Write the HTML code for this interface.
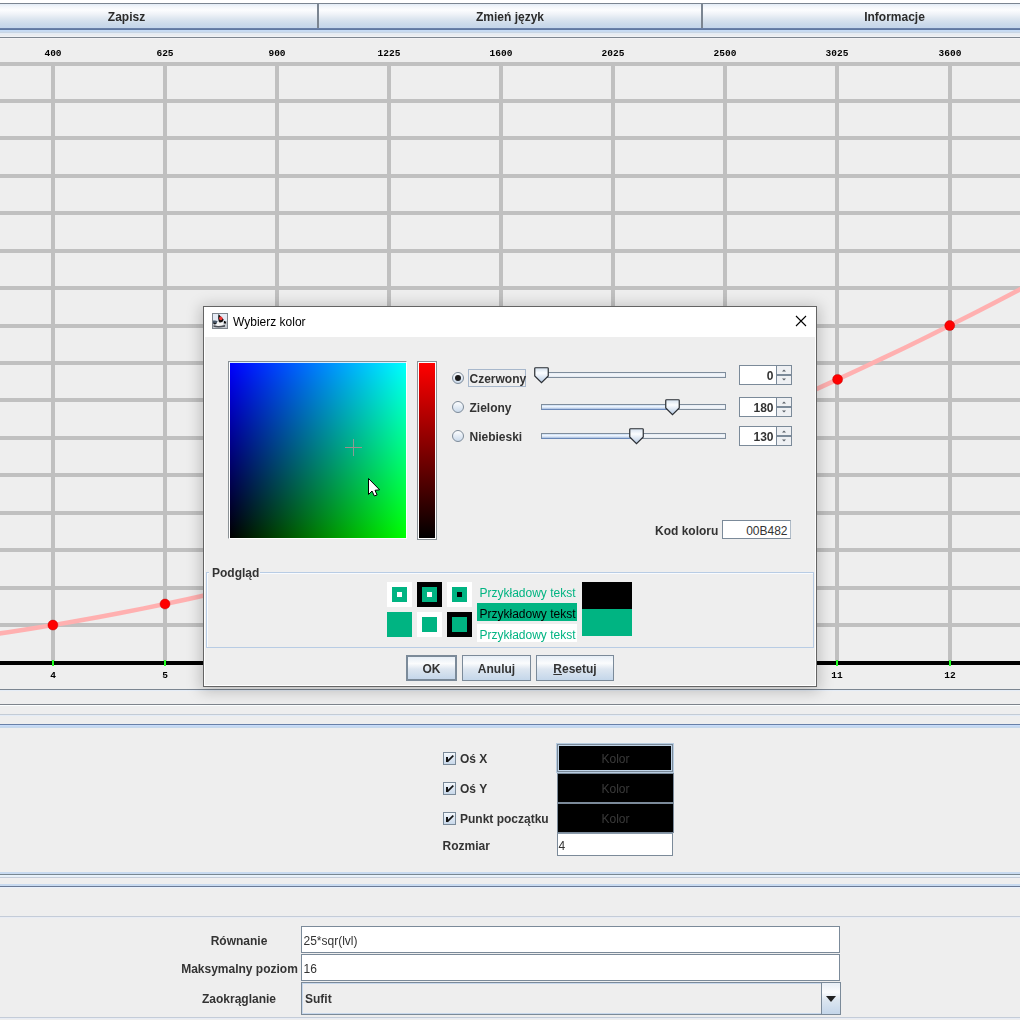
<!DOCTYPE html>
<html><head><meta charset="utf-8">
<style>
html,body{margin:0;padding:0;}
body{width:1020px;height:1020px;overflow:hidden;position:relative;background:#eeeeee;font-family:"Liberation Sans", sans-serif;}
.t{position:absolute;white-space:nowrap;}
div{box-sizing:border-box;}
</style></head><body>

<div style="position:absolute;left:0px;top:0px;width:1020px;height:3px;background:#ffffff"></div>
<div style="position:absolute;left:0px;top:3px;width:1020px;height:1px;background:#7b8591"></div>
<div style="position:absolute;left:0px;top:4px;width:1020px;height:24px;background:linear-gradient(to bottom,#e3ecf6 0px,#f4f7fb 3px,#fcfdfe 6px,#f0f3f8 10px,#dce5ef 15px,#ccdaea 20px,#c3d5ea 24px)"></div>
<div style="position:absolute;left:317px;top:3px;width:2px;height:26px;background:#7b8591"></div>
<div style="position:absolute;left:701px;top:3px;width:2px;height:26px;background:#7b8591"></div>
<div style="position:absolute;left:0px;top:28px;width:1020px;height:1px;background:#6a80a8"></div>
<div style="position:absolute;left:0px;top:29px;width:1020px;height:1px;background:#6078a0"></div>
<div style="position:absolute;left:0px;top:30px;width:1020px;height:1px;background:#c6daf4"></div>
<div style="position:absolute;left:0px;top:31px;width:1020px;height:1px;background:#c8daf0"></div>
<div style="position:absolute;left:0px;top:32px;width:1020px;height:1px;background:#cad6e4"></div>
<div style="position:absolute;left:0px;top:33px;width:1020px;height:1px;background:#e4ecf6"></div>
<div style="position:absolute;left:0px;top:34px;width:1020px;height:2px;background:#eaecf0"></div>
<div style="position:absolute;left:0px;top:36px;width:1020px;height:1px;background:#f0f2f6"></div>
<div style="position:absolute;left:0px;top:37px;width:1020px;height:1px;background:#7e8690"></div>
<div style="position:absolute;left:0px;top:38px;width:1020px;height:1px;background:#f4f2f4"></div>
<div class="t" style="left:-73.5px;width:400px;text-align:center;top:9.03px;font-size:12px;line-height:16px;font-weight:bold;color:#2b2b2b;">Zapisz</div>
<div class="t" style="left:310px;width:400px;text-align:center;top:9.03px;font-size:12px;line-height:16px;font-weight:bold;color:#2b2b2b;">Zmień język</div>
<div class="t" style="left:694.5px;width:400px;text-align:center;top:9.03px;font-size:12px;line-height:16px;font-weight:bold;color:#2b2b2b;">Informacje</div>
<svg style="position:absolute;left:0;top:0" width="1020" height="689">
<rect x="0" y="62" width="1020" height="4" fill="#c0c0c0"/>
<rect x="0" y="99" width="1020" height="4" fill="#c0c0c0"/>
<rect x="0" y="136" width="1020" height="4" fill="#c0c0c0"/>
<rect x="0" y="174" width="1020" height="4" fill="#c0c0c0"/>
<rect x="0" y="211" width="1020" height="4" fill="#c0c0c0"/>
<rect x="0" y="249" width="1020" height="4" fill="#c0c0c0"/>
<rect x="0" y="286" width="1020" height="4" fill="#c0c0c0"/>
<rect x="0" y="324" width="1020" height="4" fill="#c0c0c0"/>
<rect x="0" y="361" width="1020" height="4" fill="#c0c0c0"/>
<rect x="0" y="398" width="1020" height="4" fill="#c0c0c0"/>
<rect x="0" y="436" width="1020" height="4" fill="#c0c0c0"/>
<rect x="0" y="473" width="1020" height="4" fill="#c0c0c0"/>
<rect x="0" y="511" width="1020" height="4" fill="#c0c0c0"/>
<rect x="0" y="548" width="1020" height="4" fill="#c0c0c0"/>
<rect x="0" y="586" width="1020" height="4" fill="#c0c0c0"/>
<rect x="0" y="623" width="1020" height="4" fill="#c0c0c0"/>
<rect x="51" y="62" width="4" height="600" fill="#c0c0c0"/>
<rect x="163" y="62" width="4" height="600" fill="#c0c0c0"/>
<rect x="275" y="62" width="4" height="600" fill="#c0c0c0"/>
<rect x="387" y="62" width="4" height="600" fill="#c0c0c0"/>
<rect x="499" y="62" width="4" height="600" fill="#c0c0c0"/>
<rect x="611" y="62" width="4" height="600" fill="#c0c0c0"/>
<rect x="723" y="62" width="4" height="600" fill="#c0c0c0"/>
<rect x="835" y="62" width="4" height="600" fill="#c0c0c0"/>
<rect x="948" y="62" width="4" height="600" fill="#c0c0c0"/>
<rect x="0" y="661" width="1020" height="4" fill="#000"/>
<rect x="52" y="660" width="2" height="6" fill="#22ff22"/>
<rect x="164" y="660" width="2" height="6" fill="#22ff22"/>
<rect x="276" y="660" width="2" height="6" fill="#22ff22"/>
<rect x="388" y="660" width="2" height="6" fill="#22ff22"/>
<rect x="500" y="660" width="2" height="6" fill="#22ff22"/>
<rect x="612" y="660" width="2" height="6" fill="#22ff22"/>
<rect x="724" y="660" width="2" height="6" fill="#22ff22"/>
<rect x="836" y="660" width="2" height="6" fill="#22ff22"/>
<rect x="949" y="660" width="2" height="6" fill="#22ff22"/>
<polyline points="-59.2,641.4 -36.8,638.5 -14.4,635.5 8.1,632.2 30.5,628.7 52.9,625.1 75.3,621.2 97.7,617.2 120.2,613.0 142.6,608.6 165.0,604.0 187.4,599.2 209.8,594.3 232.3,589.1 254.7,583.8 277.1,578.3 299.5,572.6 321.9,566.7 344.4,560.6 366.8,554.3 389.2,547.8 411.6,541.2 434.0,534.4 456.5,527.4 478.9,520.1 501.3,512.8 523.7,505.2 546.1,497.4 568.6,489.4 591.0,481.3 613.4,473.0 635.8,464.5 658.2,455.8 680.7,446.9 703.1,437.8 725.5,428.5 747.9,419.1 770.3,409.4 792.8,399.6 815.2,389.6 837.6,379.4 860.0,369.0 882.4,358.4 904.9,347.7 927.3,336.7 949.7,325.6 972.1,314.2 994.5,302.7 1017.0,291.0 1039.4,279.1 1061.8,267.1" fill="none" stroke="#ffb0b0" stroke-width="4.5"/>
<circle cx="52.9" cy="625.1" r="5" fill="#ff0000" stroke="#b00000" stroke-width="0.4"/>
<circle cx="165.0" cy="604.0" r="5" fill="#ff0000" stroke="#b00000" stroke-width="0.4"/>
<circle cx="277.1" cy="578.3" r="5" fill="#ff0000" stroke="#b00000" stroke-width="0.4"/>
<circle cx="389.2" cy="547.8" r="5" fill="#ff0000" stroke="#b00000" stroke-width="0.4"/>
<circle cx="501.3" cy="512.8" r="5" fill="#ff0000" stroke="#b00000" stroke-width="0.4"/>
<circle cx="613.4" cy="473.0" r="5" fill="#ff0000" stroke="#b00000" stroke-width="0.4"/>
<circle cx="725.5" cy="428.5" r="5" fill="#ff0000" stroke="#b00000" stroke-width="0.4"/>
<circle cx="837.6" cy="379.4" r="5" fill="#ff0000" stroke="#b00000" stroke-width="0.4"/>
<circle cx="949.7" cy="325.6" r="5" fill="#ff0000" stroke="#b00000" stroke-width="0.4"/>
<text x="53" y="56" text-anchor="middle" font-family="Liberation Mono" font-weight="bold" font-size="9.5" fill="#000">400</text>
<text x="53" y="678" text-anchor="middle" font-family="Liberation Mono" font-weight="bold" font-size="9.5" fill="#000">4</text>
<text x="165" y="56" text-anchor="middle" font-family="Liberation Mono" font-weight="bold" font-size="9.5" fill="#000">625</text>
<text x="165" y="678" text-anchor="middle" font-family="Liberation Mono" font-weight="bold" font-size="9.5" fill="#000">5</text>
<text x="277" y="56" text-anchor="middle" font-family="Liberation Mono" font-weight="bold" font-size="9.5" fill="#000">900</text>
<text x="277" y="678" text-anchor="middle" font-family="Liberation Mono" font-weight="bold" font-size="9.5" fill="#000">6</text>
<text x="389" y="56" text-anchor="middle" font-family="Liberation Mono" font-weight="bold" font-size="9.5" fill="#000">1225</text>
<text x="389" y="678" text-anchor="middle" font-family="Liberation Mono" font-weight="bold" font-size="9.5" fill="#000">7</text>
<text x="501" y="56" text-anchor="middle" font-family="Liberation Mono" font-weight="bold" font-size="9.5" fill="#000">1600</text>
<text x="501" y="678" text-anchor="middle" font-family="Liberation Mono" font-weight="bold" font-size="9.5" fill="#000">8</text>
<text x="613" y="56" text-anchor="middle" font-family="Liberation Mono" font-weight="bold" font-size="9.5" fill="#000">2025</text>
<text x="613" y="678" text-anchor="middle" font-family="Liberation Mono" font-weight="bold" font-size="9.5" fill="#000">9</text>
<text x="725" y="56" text-anchor="middle" font-family="Liberation Mono" font-weight="bold" font-size="9.5" fill="#000">2500</text>
<text x="725" y="678" text-anchor="middle" font-family="Liberation Mono" font-weight="bold" font-size="9.5" fill="#000">10</text>
<text x="837" y="56" text-anchor="middle" font-family="Liberation Mono" font-weight="bold" font-size="9.5" fill="#000">3025</text>
<text x="837" y="678" text-anchor="middle" font-family="Liberation Mono" font-weight="bold" font-size="9.5" fill="#000">11</text>
<text x="950" y="56" text-anchor="middle" font-family="Liberation Mono" font-weight="bold" font-size="9.5" fill="#000">3600</text>
<text x="950" y="678" text-anchor="middle" font-family="Liberation Mono" font-weight="bold" font-size="9.5" fill="#000">12</text>
</svg>
<div style="position:absolute;left:0px;top:689px;width:1020px;height:1px;background:#7b8591"></div>
<div style="position:absolute;left:0px;top:690px;width:1020px;height:1px;background:#e4ecf6"></div>
<div style="position:absolute;left:0px;top:704px;width:1020px;height:1px;background:#7e848c"></div>
<div style="position:absolute;left:0px;top:705px;width:1020px;height:1px;background:#fcffff"></div>
<div style="position:absolute;left:0px;top:714px;width:1020px;height:1px;background:#c4ccd6"></div>
<div style="position:absolute;left:0px;top:715px;width:1020px;height:1px;background:#e4ecf6"></div>
<div style="position:absolute;left:0px;top:724px;width:1020px;height:1px;background:#6880a8"></div>
<div style="position:absolute;left:0px;top:725px;width:1020px;height:1px;background:#c8dcfa"></div>
<div style="position:absolute;left:0px;top:726px;width:1020px;height:1px;background:#c4d8f0"></div>
<div style="position:absolute;left:0px;top:727px;width:1020px;height:1px;background:#c6d8ec"></div>
<div style="position:absolute;left:0px;top:872px;width:1020px;height:2px;background:#c8daf0"></div>
<div style="position:absolute;left:0px;top:874px;width:1020px;height:1px;background:#788690"></div>
<div style="position:absolute;left:0px;top:875px;width:1020px;height:1px;background:#e8f2fc"></div>
<div style="position:absolute;left:0px;top:876px;width:1020px;height:1px;background:#e8f0f8"></div>
<div style="position:absolute;left:0px;top:877px;width:1020px;height:1px;background:#c4ccd8"></div>
<div style="position:absolute;left:0px;top:878px;width:1020px;height:1px;background:#f0eef0"></div>
<div style="position:absolute;left:0px;top:884px;width:1020px;height:2px;background:#c8daf0"></div>
<div style="position:absolute;left:0px;top:886px;width:1020px;height:1px;background:#6a7a96"></div>
<div style="position:absolute;left:0px;top:887px;width:1020px;height:1px;background:#e8f0fc"></div>
<div style="position:absolute;left:0px;top:916px;width:1020px;height:1px;background:#c4ccd8"></div>
<div style="position:absolute;left:0px;top:917px;width:1020px;height:1px;background:#e8ecf4"></div>
<div style="position:absolute;left:0px;top:1017px;width:1020px;height:1px;background:#c4ccd8"></div>
<div style="position:absolute;left:0px;top:1018px;width:1020px;height:1px;background:#e8ecf4"></div>
<div style="position:absolute;left:443px;top:752px;width:13px;height:13px;border:1px solid #7a8a99;background:linear-gradient(to bottom,#f4f8fc,#c8d8ea)"></div>
<svg style="position:absolute;left:443px;top:752px" width="13" height="13"><rect x="3" y="5" width="2" height="5" fill="#151515"/><path d="M4.3 9.6 L10.3 3.6" fill="none" stroke="#151515" stroke-width="1.7"/></svg>
<div style="position:absolute;left:443px;top:782px;width:13px;height:13px;border:1px solid #7a8a99;background:linear-gradient(to bottom,#f4f8fc,#c8d8ea)"></div>
<svg style="position:absolute;left:443px;top:782px" width="13" height="13"><rect x="3" y="5" width="2" height="5" fill="#151515"/><path d="M4.3 9.6 L10.3 3.6" fill="none" stroke="#151515" stroke-width="1.7"/></svg>
<div style="position:absolute;left:443px;top:812px;width:13px;height:13px;border:1px solid #7a8a99;background:linear-gradient(to bottom,#f4f8fc,#c8d8ea)"></div>
<svg style="position:absolute;left:443px;top:812px" width="13" height="13"><rect x="3" y="5" width="2" height="5" fill="#151515"/><path d="M4.3 9.6 L10.3 3.6" fill="none" stroke="#151515" stroke-width="1.7"/></svg>
<div class="t" style="left:460px;top:751.03px;font-size:12px;line-height:16px;font-weight:bold;color:#333;">Oś X</div>
<div class="t" style="left:460px;top:781.03px;font-size:12px;line-height:16px;font-weight:bold;color:#333;">Oś Y</div>
<div class="t" style="left:460px;top:811.03px;font-size:12px;line-height:16px;font-weight:bold;color:#333;">Punkt początku</div>
<div class="t" style="left:442.5px;top:838.03px;font-size:12px;line-height:16px;font-weight:bold;color:#333;">Rozmiar</div>
<div style="position:absolute;left:556px;top:743px;width:118px;height:30px;border:1px solid #b8cce0;"></div>
<div style="position:absolute;left:557px;top:744px;width:116px;height:28px;border:1px solid #7b8a99;background:#000;box-shadow:inset 0 0 0 1px #c0d4e8"></div>
<div style="position:absolute;left:557px;top:773px;width:117px;height:30px;border:1px solid #7b8a99;background:#000"></div>
<div style="position:absolute;left:557px;top:803px;width:117px;height:30px;border:1px solid #7b8a99;background:#000"></div>
<div class="t" style="left:415.5px;width:400px;text-align:center;top:751.03px;font-size:12px;line-height:16px;font-weight:normal;color:#3a3a3a;">Kolor</div>
<div class="t" style="left:415.5px;width:400px;text-align:center;top:781.03px;font-size:12px;line-height:16px;font-weight:normal;color:#3a3a3a;">Kolor</div>
<div class="t" style="left:415.5px;width:400px;text-align:center;top:811.03px;font-size:12px;line-height:16px;font-weight:normal;color:#3a3a3a;">Kolor</div>
<div style="position:absolute;left:557px;top:833px;width:116px;height:23px;border:1px solid #7b8a99;border-top-color:#8a9aaa;background:#fff"></div>
<div class="t" style="left:558.5px;top:838.03px;font-size:12px;line-height:16px;font-weight:normal;color:#333;">4</div>
<div class="t" style="left:39px;width:400px;text-align:center;top:933.03px;font-size:12px;line-height:16px;font-weight:bold;color:#333;">Równanie</div>
<div class="t" style="left:39.5px;width:400px;text-align:center;top:961.03px;font-size:12px;line-height:16px;font-weight:bold;color:#333;">Maksymalny poziom</div>
<div class="t" style="left:39px;width:400px;text-align:center;top:991.03px;font-size:12px;line-height:16px;font-weight:bold;color:#333;">Zaokrąglanie</div>
<div style="position:absolute;left:301px;top:926px;width:539px;height:27px;border:1px solid #7b8a99;background:#fff"></div>
<div style="position:absolute;left:301px;top:954px;width:539px;height:27px;border:1px solid #7b8a99;background:#fff"></div>
<div class="t" style="left:303.5px;top:932.53px;font-size:12px;line-height:16px;font-weight:normal;color:#333;">25*sqr(lvl)</div>
<div class="t" style="left:303.5px;top:960.53px;font-size:12px;line-height:16px;font-weight:normal;color:#333;">16</div>
<div style="position:absolute;left:301px;top:982px;width:540px;height:33px;border:1px solid #7b8a99;background:#eeeeee;box-shadow:inset 0 0 0 1px #c8d8ec"></div>
<div style="position:absolute;left:821px;top:982px;width:20px;height:33px;border:1px solid #7b8a99;background:linear-gradient(to bottom,#e8eef6,#fbfcfd 30%,#dce6f0 55%,#c4d6ea)"></div>
<svg style="position:absolute;left:821px;top:982px" width="20" height="33"><path d="M5 14 L15 14 L10 20 Z" fill="#222"/></svg>
<div class="t" style="left:305px;top:991.03px;font-size:12px;line-height:16px;font-weight:bold;color:#333;">Sufit</div>
<div style="position:absolute;left:203px;top:306px;width:614px;height:381px;box-shadow:0 2px 14px 2px rgba(0,0,0,0.22);background:#eeeeee;border:1px solid #646464"></div>
<div style="position:absolute;left:204px;top:307px;width:612px;height:30px;background:#ffffff"></div>
<div style="position:absolute;left:204px;top:337px;width:1px;height:349px;background:#fff"></div>
<div style="position:absolute;left:815px;top:337px;width:1px;height:349px;background:#fff"></div>
<div style="position:absolute;left:204px;top:685px;width:612px;height:1px;background:#fff"></div>
<svg style="position:absolute;left:212px;top:313px" width="16" height="16">
<rect x="0.5" y="0.5" width="15" height="15" fill="#e4eaf4" stroke="#7d848c"/>
<path d="M1 8 Q4 7 6 8 L10 8 Q12 8.5 15 8 L15 15 L1 15 Z" fill="#c4c8ce"/>
<path d="M4.5 9 Q7.5 8 10.5 8.5 L11.5 12 Q8 14 4 12.5 Z" fill="#f6f6f6"/>
<path d="M6.5 1 L11.8 6.8 Q10.5 10 7.5 9.5 Q5.5 7 6.5 1 Z" fill="#101010"/>
<circle cx="8.8" cy="5.4" r="1.8" fill="#f03838"/>
<path d="M1 7.6 Q3.5 7 5.5 8.3 L4.5 10.8 Q2 11.2 1 10.4 Z" fill="#4a5a6c"/>
<path d="M1.2 9.8 Q3 9.5 4.6 10.6 L2.5 11.4 Z" fill="#1a1a1a"/>
<path d="M12 7.8 Q14.2 8.2 14.2 10.2 Q13 10.8 12 10.2 Z" fill="#0c0c0c"/>
<path d="M1.5 12.2 Q6 13.8 13 12 L13 13.8 Q6 15 1.5 13.8 Z" fill="#4a4e56"/>
</svg>
<div class="t" style="left:233px;top:314.03px;font-size:12px;line-height:16px;font-weight:normal;color:#000;">Wybierz kolor</div>
<svg style="position:absolute;left:795px;top:315px" width="12" height="12"><path d="M1 1 L11 11 M11 1 L1 11" stroke="#000" stroke-width="1.1"/></svg>
<div style="position:absolute;left:228px;top:361px;width:179px;height:178px;border-top:1px solid #8a9196;border-left:1px solid #8a9196;border-right:1px solid #fff;border-bottom:1px solid #fff"></div>
<div style="position:absolute;left:229px;top:362px;width:177px;height:176px;border-top:1px solid #ddeeff;border-left:1px solid #fff"></div>
<div style="position:absolute;left:230px;top:363px;width:176px;height:175px;background:linear-gradient(to bottom,#0000ff,#000000);"><div style="position:absolute;left:0;top:0;width:176px;height:175px;background:linear-gradient(to right,#000000,#00ff00);mix-blend-mode:screen"></div></div>
<div style="position:absolute;left:345px;top:447px;width:17px;height:1px;background:#a08c8c"></div>
<div style="position:absolute;left:353px;top:439px;width:1px;height:17px;background:#8c9c94"></div>
<div style="position:absolute;left:417px;top:361px;width:20px;height:179px;border-top:1px solid #8a9196;border-left:1px solid #8a9196;border-right:1px solid #8a9196;border-bottom:1px solid #8a9196"></div>
<div style="position:absolute;left:418px;top:362px;width:18px;height:177px;border:1px solid #fff"></div>
<div style="position:absolute;left:419px;top:363px;width:16px;height:175px;background:linear-gradient(to bottom,#ff0000,#000000)"></div>
<svg style="position:absolute;left:452px;top:372px" width="12" height="12">
<defs><linearGradient id="rg372" x1="0" y1="0" x2="0" y2="1"><stop offset="0" stop-color="#ffffff"/><stop offset="1" stop-color="#c8d8ea"/></linearGradient></defs>
<circle cx="6" cy="6" r="5.5" fill="url(#rg372)" stroke="#7d8a98" stroke-width="1"/>
<circle cx="6" cy="6" r="3" fill="#1a1a1a"/>
</svg>
<svg style="position:absolute;left:452px;top:401px" width="12" height="12">
<defs><linearGradient id="rg401" x1="0" y1="0" x2="0" y2="1"><stop offset="0" stop-color="#ffffff"/><stop offset="1" stop-color="#c8d8ea"/></linearGradient></defs>
<circle cx="6" cy="6" r="5.5" fill="url(#rg401)" stroke="#7d8a98" stroke-width="1"/>

</svg>
<svg style="position:absolute;left:452px;top:430px" width="12" height="12">
<defs><linearGradient id="rg430" x1="0" y1="0" x2="0" y2="1"><stop offset="0" stop-color="#ffffff"/><stop offset="1" stop-color="#c8d8ea"/></linearGradient></defs>
<circle cx="6" cy="6" r="5.5" fill="url(#rg430)" stroke="#7d8a98" stroke-width="1"/>

</svg>
<div style="position:absolute;left:468px;top:369px;width:58px;height:18px;border:1px solid #a8b8cc"></div>
<div class="t" style="left:469.5px;top:371.03px;font-size:12px;line-height:16px;font-weight:bold;color:#333;">Czerwony</div>
<div class="t" style="left:469.5px;top:400.03px;font-size:12px;line-height:16px;font-weight:bold;color:#333;">Zielony</div>
<div class="t" style="left:469.5px;top:429.03px;font-size:12px;line-height:16px;font-weight:bold;color:#333;">Niebieski</div>
<div style="position:absolute;left:541px;top:372px;width:185px;height:6px;border:1px solid #7f8d9c;background:linear-gradient(to bottom,#e4ebf3,#f6f8fb 50%,#dfe6ee)"></div>
<svg style="position:absolute;left:534.0px;top:367px" width="15" height="17">
<defs><linearGradient id="tg372" x1="0" y1="0" x2="0" y2="1"><stop offset="0" stop-color="#d4e0ee"/><stop offset="0.35" stop-color="#fbfdff"/><stop offset="1" stop-color="#b4c8e2"/></linearGradient></defs>
<path d="M0.75 1.5 Q0.75 0.75 1.5 0.75 L13.5 0.75 Q14.25 0.75 14.25 1.5 L14.25 9 L7.5 15.75 L0.75 9 Z" fill="url(#tg372)" stroke="#2a2e33" stroke-width="1.2"/>
</svg>
<div style="position:absolute;left:541px;top:404px;width:185px;height:6px;border:1px solid #7f8d9c;background:linear-gradient(to bottom,#e4ebf3,#f6f8fb 50%,#dfe6ee)"></div>
<div style="position:absolute;left:541px;top:404px;width:131px;height:6px;border:1px solid #7f8d9c;border-bottom-color:#6a88b8;border-right:none;background:linear-gradient(to bottom,#c8dcf4,#f4f9ff 45%,#a4bcdf)"></div>
<svg style="position:absolute;left:665.0px;top:399px" width="15" height="17">
<defs><linearGradient id="tg404" x1="0" y1="0" x2="0" y2="1"><stop offset="0" stop-color="#d4e0ee"/><stop offset="0.35" stop-color="#fbfdff"/><stop offset="1" stop-color="#b4c8e2"/></linearGradient></defs>
<path d="M0.75 1.5 Q0.75 0.75 1.5 0.75 L13.5 0.75 Q14.25 0.75 14.25 1.5 L14.25 9 L7.5 15.75 L0.75 9 Z" fill="url(#tg404)" stroke="#2a2e33" stroke-width="1.2"/>
</svg>
<div style="position:absolute;left:541px;top:433px;width:185px;height:6px;border:1px solid #7f8d9c;background:linear-gradient(to bottom,#e4ebf3,#f6f8fb 50%,#dfe6ee)"></div>
<div style="position:absolute;left:541px;top:433px;width:95px;height:6px;border:1px solid #7f8d9c;border-bottom-color:#6a88b8;border-right:none;background:linear-gradient(to bottom,#c8dcf4,#f4f9ff 45%,#a4bcdf)"></div>
<svg style="position:absolute;left:628.6px;top:428px" width="15" height="17">
<defs><linearGradient id="tg433" x1="0" y1="0" x2="0" y2="1"><stop offset="0" stop-color="#d4e0ee"/><stop offset="0.35" stop-color="#fbfdff"/><stop offset="1" stop-color="#b4c8e2"/></linearGradient></defs>
<path d="M0.75 1.5 Q0.75 0.75 1.5 0.75 L13.5 0.75 Q14.25 0.75 14.25 1.5 L14.25 9 L7.5 15.75 L0.75 9 Z" fill="url(#tg433)" stroke="#2a2e33" stroke-width="1.2"/>
</svg>
<div style="position:absolute;left:739px;top:365px;width:53px;height:20px;border:1px solid #7b8a99;background:#eeeeee"></div>
<div style="position:absolute;left:740px;top:366px;width:36px;height:18px;background:#fff"></div>
<div style="position:absolute;left:776px;top:365px;width:16px;height:20px;border:1px solid #7b8a99;background:#eef0f3"></div>
<div style="position:absolute;left:776px;top:374px;width:16px;height:2px;background:#7b8a99"></div>
<svg style="position:absolute;left:776px;top:365px" width="16" height="20"><path d="M6 6.5 L10 6.5 L8 4.5 Z" fill="#5a6068"/><path d="M6 13.5 L10 13.5 L8 15.5 Z" fill="#5a6068"/></svg>
<div class="t" style="right:246.5px;top:368.03px;font-size:12px;line-height:16px;font-weight:bold;color:#333;">0</div>
<div style="position:absolute;left:739px;top:397px;width:53px;height:20px;border:1px solid #7b8a99;background:#eeeeee"></div>
<div style="position:absolute;left:740px;top:398px;width:36px;height:18px;background:#fff"></div>
<div style="position:absolute;left:776px;top:397px;width:16px;height:20px;border:1px solid #7b8a99;background:#eef0f3"></div>
<div style="position:absolute;left:776px;top:406px;width:16px;height:2px;background:#7b8a99"></div>
<svg style="position:absolute;left:776px;top:397px" width="16" height="20"><path d="M6 6.5 L10 6.5 L8 4.5 Z" fill="#5a6068"/><path d="M6 13.5 L10 13.5 L8 15.5 Z" fill="#5a6068"/></svg>
<div class="t" style="right:246.5px;top:400.03px;font-size:12px;line-height:16px;font-weight:bold;color:#333;">180</div>
<div style="position:absolute;left:739px;top:426px;width:53px;height:20px;border:1px solid #7b8a99;background:#eeeeee"></div>
<div style="position:absolute;left:740px;top:427px;width:36px;height:18px;background:#fff"></div>
<div style="position:absolute;left:776px;top:426px;width:16px;height:20px;border:1px solid #7b8a99;background:#eef0f3"></div>
<div style="position:absolute;left:776px;top:435px;width:16px;height:2px;background:#7b8a99"></div>
<svg style="position:absolute;left:776px;top:426px" width="16" height="20"><path d="M6 6.5 L10 6.5 L8 4.5 Z" fill="#5a6068"/><path d="M6 13.5 L10 13.5 L8 15.5 Z" fill="#5a6068"/></svg>
<div class="t" style="right:246.5px;top:429.03px;font-size:12px;line-height:16px;font-weight:bold;color:#333;">130</div>
<div class="t" style="left:655px;top:523.03px;font-size:12px;line-height:16px;font-weight:bold;color:#333;">Kod koloru</div>
<div style="position:absolute;left:722px;top:520px;width:69px;height:19px;border:1px solid #7b8a99;border-right-color:#b0bcc8;background:#fff"></div>
<div class="t" style="right:232.5px;top:522.53px;font-size:12px;line-height:16px;font-weight:normal;color:#333;">00B482</div>
<div style="position:absolute;left:206px;top:572px;width:608px;height:76px;border:1px solid #b8cce4;box-shadow:inset 1px 1px 0 #f8fbff"></div>
<div style="position:absolute;left:209px;top:566px;width:51px;height:12px;background:#eeeeee"></div>
<div class="t" style="left:212px;top:565.03px;font-size:12px;line-height:16px;font-weight:bold;color:#333;">Podgląd</div>
<div style="position:absolute;left:387px;top:582px;width:25px;height:25px;background:#fff"></div>
<div style="position:absolute;left:392px;top:587px;width:15px;height:15px;background:#00b482"></div>
<div style="position:absolute;left:397px;top:592px;width:5px;height:5px;background:#fff"></div>
<div style="position:absolute;left:417px;top:582px;width:25px;height:25px;background:#000"></div>
<div style="position:absolute;left:422px;top:587px;width:15px;height:15px;background:#00b482"></div>
<div style="position:absolute;left:427px;top:592px;width:5px;height:5px;background:#fff"></div>
<div style="position:absolute;left:447px;top:582px;width:25px;height:25px;background:#fff"></div>
<div style="position:absolute;left:452px;top:587px;width:15px;height:15px;background:#00b482"></div>
<div style="position:absolute;left:457px;top:592px;width:5px;height:5px;background:#000"></div>
<div style="position:absolute;left:387px;top:612px;width:25px;height:25px;background:#00b482"></div>
<div style="position:absolute;left:417px;top:612px;width:25px;height:25px;background:#fff"></div>
<div style="position:absolute;left:422px;top:617px;width:15px;height:15px;background:#00b482"></div>
<div style="position:absolute;left:447px;top:612px;width:25px;height:25px;background:#000"></div>
<div style="position:absolute;left:452px;top:617px;width:15px;height:15px;background:#00b482"></div>
<div class="t" style="left:479.5px;top:585.03px;font-size:12px;line-height:16px;font-weight:normal;color:#00b482;">Przykładowy tekst</div>
<div style="position:absolute;left:477px;top:603px;width:100px;height:18px;background:#00b482"></div>
<div class="t" style="left:479.5px;top:606.03px;font-size:12px;line-height:16px;font-weight:normal;color:#000;">Przykładowy tekst</div>
<div style="position:absolute;left:477px;top:624px;width:100px;height:18px;background:#fff"></div>
<div class="t" style="left:479.5px;top:627.03px;font-size:12px;line-height:16px;font-weight:normal;color:#00b482;">Przykładowy tekst</div>
<div style="position:absolute;left:582px;top:582px;width:50px;height:27px;background:#000"></div>
<div style="position:absolute;left:582px;top:609px;width:50px;height:27px;background:#00b482"></div>
<div style="position:absolute;left:406px;top:655px;width:51px;height:26px;border:2px solid #7b8a99;background:linear-gradient(to bottom,#e6eef6,#fbfcfd 30%,#dde6f0 55%,#c4d6ea)"></div>
<div class="t" style="left:231.5px;width:400px;text-align:center;top:661.03px;font-size:12px;line-height:16px;font-weight:bold;color:#333;">OK</div>
<div style="position:absolute;left:462px;top:655px;width:69px;height:26px;border:1px solid #7b8a99;background:linear-gradient(to bottom,#e6eef6,#fbfcfd 30%,#dde6f0 55%,#c4d6ea)"></div>
<div class="t" style="left:296.5px;width:400px;text-align:center;top:661.03px;font-size:12px;line-height:16px;font-weight:bold;color:#333;">Anuluj</div>
<div style="position:absolute;left:536px;top:655px;width:78px;height:26px;border:1px solid #7b8a99;background:linear-gradient(to bottom,#e6eef6,#fbfcfd 30%,#dde6f0 55%,#c4d6ea)"></div>
<div class="t" style="left:375.0px;width:400px;text-align:center;top:661.03px;font-size:12px;line-height:16px;font-weight:bold;color:#333;"><u>R</u>esetuj</div>
<svg style="position:absolute;left:368px;top:478px" width="14" height="20"><path d="M0.5 0.5 L0.5 16.5 L4 13 L6.3 17.9 L9.1 17 L7 12.3 L11.6 11.8 Z" fill="#fff" stroke="#000" stroke-width="1" stroke-linejoin="miter"/></svg>
</body></html>
